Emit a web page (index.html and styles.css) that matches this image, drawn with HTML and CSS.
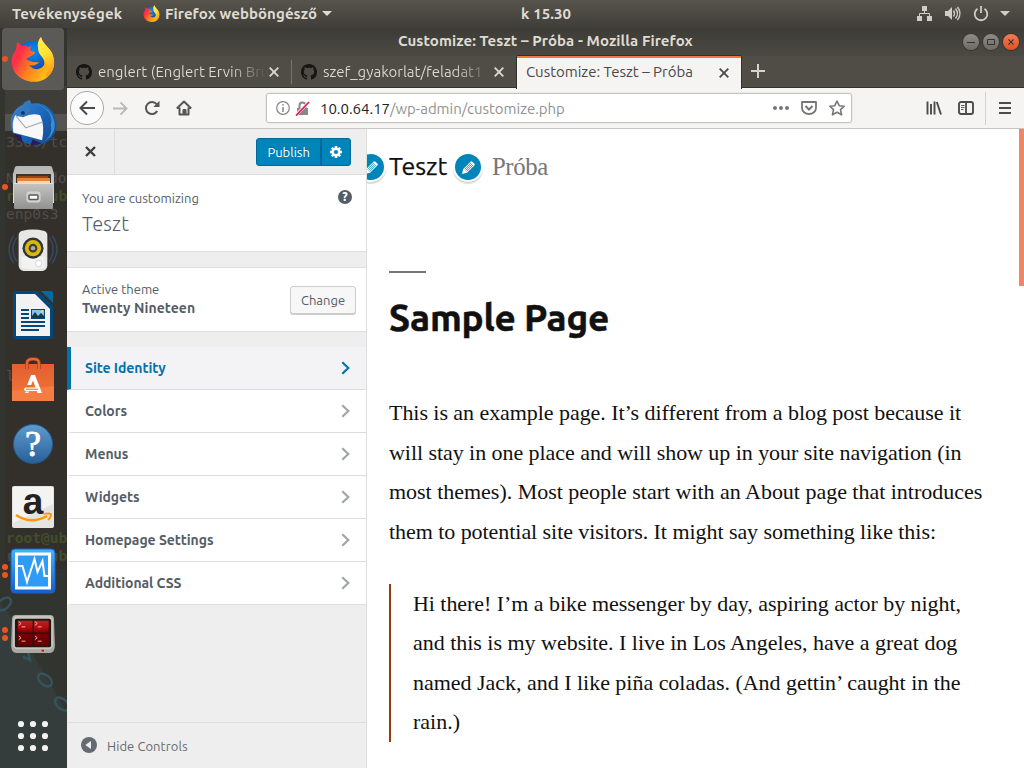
FILE: index.html
```html
<!DOCTYPE html>
<html lang="hu">
<head>
<meta charset="utf-8">
<title>Customize: Teszt – Próba</title>
<link rel="stylesheet" href="styles.css">
</head>
<body>
<svg class="defs" width="0" height="0">
  <defs>
    <linearGradient id="fxBody" x1="0" y1="0" x2="1" y2=".6"><stop offset="0" stop-color="#ff3750"/><stop offset=".3" stop-color="#ff2d48"/><stop offset=".6" stop-color="#ff7d20"/><stop offset="1" stop-color="#ffc414"/></linearGradient>
    <linearGradient id="fxTail" x1="0" y1="0" x2=".3" y2="1"><stop offset="0" stop-color="#fff44f"/><stop offset=".5" stop-color="#ffe332"/><stop offset="1" stop-color="#ff9f18"/></linearGradient>
    <radialGradient id="fxGlobe" cx=".5" cy=".3" r=".7"><stop offset="0" stop-color="#0290ee"/><stop offset=".5" stop-color="#0763ce"/><stop offset="1" stop-color="#222b7c"/></radialGradient>
    <linearGradient id="tb" x1="0" y1="0" x2="1" y2="1"><stop offset="0" stop-color="#4389c9"/><stop offset=".5" stop-color="#1a67b9"/><stop offset="1" stop-color="#174689"/></linearGradient>
    <linearGradient id="metal" x1="0" y1="0" x2="0" y2="1"><stop offset="0" stop-color="#c4c4c2"/><stop offset="1" stop-color="#929290"/></linearGradient>
    <linearGradient id="lid" x1="0" y1="0" x2="0" y2="1"><stop offset="0" stop-color="#b4b4b2"/><stop offset="1" stop-color="#e2e2e0"/></linearGradient>
    <linearGradient id="bag" x1="0" y1="0" x2="0" y2="1"><stop offset="0" stop-color="#e35e31"/><stop offset=".8" stop-color="#ef7335"/><stop offset="1" stop-color="#f57a39"/></linearGradient>
    <linearGradient id="help" x1="0" y1="0" x2="0" y2="1"><stop offset="0" stop-color="#5e9bce"/><stop offset="1" stop-color="#276099"/></linearGradient>
    <linearGradient id="vb" x1="0" y1="0" x2="0" y2="1"><stop offset="0" stop-color="#42b4ff"/><stop offset="1" stop-color="#155fce"/></linearGradient>
    <linearGradient id="red" x1="0" y1="0" x2="0" y2="33" gradientUnits="userSpaceOnUse"><stop offset="0" stop-color="#c9353c"/><stop offset=".45" stop-color="#b00a0a"/><stop offset=".6" stop-color="#7a0000"/><stop offset="1" stop-color="#660000"/></linearGradient>
    <symbol id="firefox" viewBox="0 0 44 46">
      <circle cx="22" cy="23" r="18" fill="url(#fxGlobe)"/>
      <path d="M6 6C8 7 10 9 11 10C14 9 16 10 17 11L21 10C19 12 19 14 20 15L24 16C24 18 22 19 20 20L15 23C19 25 22 27 28 26C26 29 22 30 18 29C23 35 30 34 33 29C34 24 31 20 29 14C27 8 27 4 30 1C32 8 37 10 41 17C46 28 42 38 34 43C23 49 9 45 3 35C-1 27 0 20 5 14Z" fill="url(#fxBody)"/>
      <path d="M30 1C32 8 37 10 41 17C45 26 43 37 35 42C34 37 38 31 34 25C31 20 27 18 27 12C26 7 28 3 30 1Z" fill="url(#fxTail)"/>
    </symbol>
    <symbol id="github" viewBox="0 0 16 16"><path fill="#151513" fill-rule="evenodd" d="M8 0C3.58 0 0 3.58 0 8c0 3.54 2.29 6.53 5.47 7.59.4.07.55-.17.55-.38 0-.19-.01-.82-.01-1.49-2.01.37-2.53-.49-2.69-.94-.09-.23-.48-.94-.82-1.13-.28-.15-.68-.52-.01-.53.63-.01 1.08.58 1.23.82.72 1.21 1.87.87 2.33.66.07-.52.28-.87.51-1.07-1.78-.2-3.64-.89-3.64-3.95 0-.87.31-1.59.82-2.15-.08-.2-.36-1.02.08-2.12 0 0 .67-.21 2.2.82.64-.18 1.32-.27 2-.27s1.36.09 2 .27c1.53-1.04 2.2-.82 2.2-.82.44 1.1.16 1.92.08 2.12.51.56.82 1.27.82 2.15 0 3.07-1.87 3.75-3.65 3.95.29.25.54.73.54 1.48 0 1.07-.01 1.93-.01 2.2 0 .21.15.46.55.38A8.01 8.01 0 0 0 16 8c0-4.42-3.58-8-8-8"/></symbol>
    <symbol id="x" viewBox="0 0 10 10"><path d="M.7.7L9.3 9.3M9.3.7L.7 9.3" fill="none" stroke="currentColor" stroke-width="1.8"/></symbol>
    <symbol id="chev" viewBox="0 0 9 14"><path d="M1.3 1.2L7.3 7L1.3 12.8" fill="none" stroke="currentColor" stroke-width="2.2"/></symbol>
    <symbol id="pencil" viewBox="0 0 16 16"><path d="M1 15L2.4 9.6L10.2 1.8Q11.2.8 12.3 1.8L14.2 3.7Q15.2 4.8 14.2 5.8L6.4 13.6Z" fill="#fff"/><path d="M3.8 10L10.6 3.2M6 12.2L12.8 5.4M4.9 11.1L11.7 4.3" stroke="#0085ba" stroke-width=".8"/></symbol>
  </defs>
</svg>

<header class="panel">
  <span class="panel-act">Tevékenységek</span>
  <svg class="panel-fx" width="17" height="17"><use href="#firefox"/></svg>
  <span class="panel-app">Firefox webböngésző</span>
  <svg class="panel-arrow" width="10" height="5"><path d="M0 0H10L5 5Z" fill="#dfdbd2"/></svg>
  <span class="panel-clock">k 15.30</span>
  <svg class="panel-status" width="94" height="18" fill="#cfcdc8">
    <path d="M5 1h5v5H5zM0 11h5v5H0zM10 11h5v5h-5z"/><path d="M7.5 6v3M2.5 11V8.500h10V11" fill="none" stroke="#cfcdc8"/>
    <path d="M28 6h3l4-4v13l-4-4h-3z"/><path d="M36.500 5.500q2 3 0 6M38.500 3.500q4 5 0 10M40.500 2q5 6.500 0 13" fill="none" stroke="#cfcdc8" stroke-width="1.400"/>
    <path d="M60.500 3.700a6.300 6.300 0 1 0 7 0M64 1v7" fill="none" stroke="#cfcdc8" stroke-width="1.800"/>
    <path d="M83 6h10l-5 5z"/>
  </svg>
</header>

<div class="desktop">
  <nav class="dock">
    <svg class="dock-back" width="67" height="740">
      <rect width="67" height="740" fill="#32342f"/>
      <path d="M0 575L12 590L67 685V740H0Z" fill="#343d3c"/>
      <g fill="none" stroke="#35535a" stroke-width="2.500"><ellipse cx="4" cy="576" rx="5" ry="8" transform="rotate(50 4 576)"/><ellipse cx="45" cy="652" rx="5" ry="8" transform="rotate(-50 45 652)"/><ellipse cx="62" cy="676" rx="5" ry="8" transform="rotate(-50 62 676)"/><path d="M23 629L30 632L28 624"/></g>
      <rect x="5" y="56" width="62" height="485" fill="#33302c"/>
      <rect x="5" y="58" width="62" height="28" fill="#3f3d38"/>
      <rect x="5" y="86" width="62" height="17" fill="#555350"/>
      <g class="term"><text x="6" y="119">3306/tc</text><text x="6" y="155">N</text><text x="49" y="155">do</text><text x="6" y="191">enp0s3</text><text x="6" y="353">l</text></g>
      <g class="term term-green"><text x="6" y="173">root@ub</text><text x="6" y="515">root@ub</text><text x="6" y="533">root@ub</text></g>
    </svg>
    <div class="slot slot-active"><svg width="44" height="46"><use href="#firefox"/></svg><i class="dot"></i></div>
    <div class="slot up"><svg width="49" height="48" viewBox="0 0 50 50">
      <path d="M2 31C-1 18 6 9 14 6C15 3 18 2 21 1L23 5C37 2 49 13 49 27C49 41 37 49 25 48C13 46 4 40 2 31Z" fill="url(#tb)"/>
      <path d="M26 5C40 8 46 19 43 27C45 34 41 42 33 46C43 41 48 34 47 25C45 14 38 7 26 5Z" fill="#398ed0"/>
      <path d="M4 36Q8 44 14 46L12 38ZM24 42L33 46Q28 49 22 48Z" fill="#2a1d55"/>
      <path d="M6 17L14 19Q24 14 32 17Q37 28 34 43L4 35Q2 24 6 17Z" fill="#f8f8f8"/><path d="M7 18L17 30L34 24" fill="none" stroke="#b0b0b0" stroke-width="1.300"/>
      <path d="M7 18Q9 10 17 7Q25 9 20 14Q15 17 12 18Z" fill="#3278bd"/><circle cx="14" cy="14.500" r="2" fill="#18365e"/>
    </svg></div>
    <div class="slot up"><svg width="43" height="45" viewBox="0 0 43 45">
      <path d="M3 2Q4 1 5 1H38Q39 1 40 2L42 9V38H1V9Z" fill="url(#lid)"/><path d="M4 9h35v10H4z" fill="#3a3733"/><path d="M6 11h30v8H6z" fill="#994519"/><path d="M5 13h33v5H5z" fill="#e5833c"/><path d="M6 16h32v2H6z" fill="#f5d7ad"/>
      <rect x="2" y="18" width="39" height="26" rx="1" fill="url(#metal)"/><path d="M2 18.500h39" stroke="#dededc"/><rect x="15" y="27" width="13" height="10" rx="2" fill="#ccc" stroke="#d8d8d8"/><rect x="17" y="30" width="9" height="4.500" rx="1" fill="#fff" stroke="#5a5a5a" stroke-width="1.500"/>
    </svg><i class="dot"></i></div>
    <div class="slot up"><svg width="50" height="44" viewBox="0 0 50 46">
      <path d="M8 9Q0 21 8 34M5 7Q-5 21 5 36M42 9Q50 21 42 34M45 7Q55 21 45 36" fill="none" stroke="#354b63" stroke-width="1.500"/>
      <path d="M13 2Q25-1 37 2Q40 3 40 7V38Q40 43 35 44H15Q10 43 10 38V7Q10 3 13 2Z" fill="#e7e7e5"/><path d="M13 29H37V40Q25 44 13 40Z" fill="#f3f3f3"/><circle cx="25" cy="20" r="11" fill="#333"/><circle cx="25" cy="20" r="8.500" fill="#d5b816"/><circle cx="25" cy="20" r="4.500" fill="#443d25"/><circle cx="25" cy="20" r="2.300" fill="#aaa"/><circle cx="31" cy="36" r="3.500" fill="#fff" stroke="#d0d0d0"/>
    </svg></div>
    <div class="slot up"><svg width="40" height="48" viewBox="0 0 40 48">
      <path d="M3 0H25L40 15V45Q40 48 37 48H3Q0 48 0 45V3Q0 0 3 0Z" fill="#04477a"/><path d="M3 3H22L37 18V45H3Z" fill="#f2f2f2"/><path d="M28 0H38Q40 0 40 2V12Z" fill="#0369a3"/>
      <path d="M8 19h8M8 23h8M8 27h8M8 31h24M8 35h24M8 39h18" stroke="#04477a" stroke-width="2"/><rect x="18.500" y="18.500" width="13" height="9" fill="#7fc6ef" stroke="#04477a"/><path d="M19 27V25L22 21L25 25L28 22L31 25V27Z" fill="#27343b"/><circle cx="29" cy="20.500" r="1.300" fill="#f2d543"/>
    </svg></div>
    <div class="slot up"><svg width="42" height="44" viewBox="0 0 42 44">
      <path d="M0 7H42V44H0Z" fill="url(#bag)"/><path d="M0 34L42 29V44H0Z" fill="#f47d44"/><path d="M15 12V6Q15 2 21 2Q27 2 27 6V12" fill="none" stroke="#b63f17" stroke-width="3.500"/><path d="M15 12V6Q15 2 21 2Q27 2 27 6V12" fill="none" stroke="#ea6a39" stroke-width="1.800"/>
      <path d="M19 18H23L30 36H25.500L21 23.500L19.200 28H15.200ZM14 30.500H27.500V34H14Q12 34 12 32.200Q12 30.500 14 30.500ZM13.500 34.500H17L16.500 36H13Z" fill="#fff"/><path d="M14 32.200H26" stroke="#ed6f39" stroke-width="1.100"/>
    </svg></div>
    <div class="slot"><svg width="40" height="40" viewBox="0 0 40 40"><circle cx="20" cy="20" r="19.500" fill="url(#help)" stroke="#265b91"/><text x="20" y="32" text-anchor="middle" class="help-glyph">?</text></svg></div>
    <div class="slot up"><svg width="42" height="42" viewBox="0 0 42 42"><rect width="42" height="42" rx="2" fill="#e4e4e3"/><path d="M1 1H41V18L1 37Z" fill="#f3f3f2"/><text x="21" y="28" text-anchor="middle" class="amazon-glyph">a</text><path d="M4 29Q19 39 35 30" fill="none" stroke="#f90" stroke-width="2.500"/><path d="M32 28Q36 27 39 28Q39 32 36 34" fill="none" stroke="#f90" stroke-width="1.800"/></svg></div>
    <div class="slot up"><svg width="46" height="46" viewBox="0 0 46 46"><rect x="1" y="1" width="44" height="44" rx="4" fill="url(#vb)" stroke="#1b62c6"/><rect x="6.500" y="6" width="33" height="34" fill="#2f9bf7" stroke="#fff" stroke-width="3"/><path d="M8 18H12.500L17 34L24.500 11L27.500 24L32.500 13L34.500 28H39" fill="none" stroke="#fff" stroke-width="2"/></svg><i class="dot dot-up"></i><i class="dot dot-down"></i></div>
    <div class="slot up-two"><svg width="46" height="40" viewBox="0 0 46 42"><path d="M5 1H41Q45 1 45 5L46 33Q46 40 41 41H5Q0 40 0 33L1 5Q1 1 5 1Z" fill="#aaa9a1"/><path d="M5 2H41Q44 2 44 7V32Q44 36 40 37H6Q2 36 2 32V7Q2 2 5 2Z" fill="#c7c6be"/><rect x="4" y="5" width="38" height="30" rx="2" fill="#231616"/><path d="M7 7h15.500v12.500H7zM24 7h15.500v12.500H24zM7 21h15.500v12H7zM24 21h15.500v12H24z" fill="url(#red)"/><path d="M8 8l2.500 2-2.500 2M11 13.500h4M25 8l2.500 2-2.500 2M28 13.500h4M8 23l2.500 2-2.500 2M11 28.500h4M25 23l2.500 2-2.500 2M28 28.500h4" fill="none" stroke="#efb6b6"/><path d="M32 38.500h2.500" stroke="#e00" stroke-width="2"/></svg><i class="dot dot-up"></i><i class="dot dot-down"></i></div>
    <svg class="apps" width="32" height="32" fill="#f2f2f0"><circle cx="4" cy="4" r="3.100"/><circle cx="16" cy="4" r="3.100"/><circle cx="28" cy="4" r="3.100"/><circle cx="4" cy="16" r="3.100"/><circle cx="16" cy="16" r="3.100"/><circle cx="28" cy="16" r="3.100"/><circle cx="4" cy="28" r="3.100"/><circle cx="16" cy="28" r="3.100"/><circle cx="28" cy="28" r="3.100"/></svg>
  </nav>

  <main class="window">
    <div class="titlebar">
      <span class="title">Customize: Teszt – Próba - Mozilla Firefox</span>
      <div class="win-buttons">
        <span class="wb"><svg width="10" height="10"><path d="M1 5.500h8" stroke="#33322e"/></svg></span>
        <span class="wb"><svg width="10" height="10"><path d="M1.500 2.500h7v5h-7z" fill="none" stroke="#33322e"/></svg></span>
        <span class="wb wb-close"><svg width="6" height="6"><use href="#x"/></svg></span>
      </div>
    </div>
    <div class="tabs">
      <div class="tab tab-one"><svg width="16" height="16"><use href="#github"/></svg><span class="tab-text">englert (Englert Ervin Bru</span><svg class="tab-x" width="10" height="10"><use href="#x"/></svg></div>
      <div class="tab tab-two"><svg width="16" height="16"><use href="#github"/></svg><span class="tab-text">szef_gyakorlat/feladat1</span><svg class="tab-x" width="10" height="10"><use href="#x"/></svg></div>
      <div class="tab tab-current"><span class="tab-name">Customize: Teszt – Próba</span><svg class="tab-x" width="10" height="10"><use href="#x"/></svg></div>
      <svg class="newtab" width="14" height="14"><path d="M7 0v14M0 7h14" stroke="#d5d3cf" stroke-width="2"/></svg>
    </div>
    <div class="toolbar">
      <span class="back"><svg width="17" height="16" viewBox="0 0 17 16"><path d="M16 8H2M8 1.500L1.500 8L8 14.500" fill="none" stroke="#4a4a4a" stroke-width="2"/></svg></span>
      <svg class="forward" width="16" height="15" viewBox="0 0 17 16"><path d="M1 8H15M9 1.500L15.500 8L9 14.500" fill="none" stroke="#b9b9b8" stroke-width="2"/></svg>
      <svg class="reload" width="16" height="16"><path d="M13.200 11A6 6 0 1 1 12.600 4.200" fill="none" stroke="#555" stroke-width="2"/><path d="M15.500 .8V7H9.300Z" fill="#555"/></svg>
      <svg class="home" width="16" height="16"><path d="M.8 8.500L8 1.500L15.200 8.500M3.500 7.500V14.500H12.500V7.500M7.500 14V10H9.500V14" fill="none" stroke="#555" stroke-width="2" stroke-linejoin="round"/></svg>
      <div class="urlbar">
        <svg class="info" width="14" height="14"><circle cx="7" cy="7" r="6.300" fill="none" stroke="#858585" stroke-width="1.200"/><path d="M7 6v5M7 3v1.600" stroke="#858585" stroke-width="1.500"/></svg>
        <svg class="lock" width="15" height="15"><path d="M2 7h11v7H2z" fill="#888"/><path d="M4.500 7V4.500q0-3 3-3t3 3V7" fill="none" stroke="#888" stroke-width="2"/><path d="M0 15L14 1" stroke="#fff" stroke-width="3"/><path d="M1 14.500L14 1" stroke="#e8184b" stroke-width="1.800"/></svg>
        <span class="url"><b>10.0.64.17</b>/wp-admin/customize.php</span>
        <svg class="url-actions" width="72" height="16" fill="none" stroke="#777"><g fill="#777" stroke="none"><circle cx="2" cy="8" r="2"/><circle cx="8" cy="8" r="2"/><circle cx="14" cy="8" r="2"/></g><path d="M29 2h14v6a7 6 0 0 1-14 0z" stroke-width="1.800" stroke-linejoin="round"/><path d="M32.500 6L36 9.500L39.500 6" stroke-width="2"/><path d="M64 1L66.200 5.700L71.200 6.200L67.500 9.700L68.600 14.800L64 12.200L59.400 14.800L60.500 9.700L56.800 6.200L61.800 5.700Z" stroke-width="1.600" stroke-linejoin="round"/></svg>
      </div>
      <svg class="library" width="16" height="16"><path d="M1.500 1.500v13M5 4v10.500M8.500 1.500v13M10.800 2L15 14.500" fill="none" stroke="#4b4b4b" stroke-width="1.900"/></svg>
      <svg class="side" width="16" height="14"><rect x="1" y="1" width="14" height="12" rx="2" fill="none" stroke="#4b4b4b" stroke-width="1.900"/><path d="M8 1v12" stroke="#4b4b4b" stroke-width="1.800"/><path d="M3 4.500h3.500M3 6.500h3.500M3 8.500h2.500" stroke="#4b4b4b" stroke-width=".9"/></svg>
      <span class="tool-sep"></span>
      <svg class="menu" width="12" height="12"><path d="M0 1h12M0 6h12M0 11h12" stroke="#4b4b4b" stroke-width="1.900"/></svg>
    </div>

    <div class="content">
      <aside class="customizer">
        <div class="cust-head">
          <span class="cust-close"><svg width="11" height="11" viewBox="0 0 11 11"><path d="M1 1L10 10M10 1L1 10" stroke="#3e3e3e" stroke-width="2.400"/></svg></span>
          <div class="publish"><span class="pub-label">Publish</span><span class="pub-gear"><svg width="12" height="12" viewBox="-6 -6 12 12"><circle r="3.300" fill="none" stroke="#fff" stroke-width="2.500"/><path d="M0-6V-3M0 3V6M-6 0H-3M3 0H6M-4.200-4.200L-2.500-2.500M4.200 4.200L2.500 2.500M4.200-4.200L2.500-2.500M-4.200 4.200L-2.500 2.500" stroke="#fff" stroke-width="2.500"/></svg></span></div>
        </div>
        <section class="info-box">
          <div class="customizing"><span>You are customizing</span><strong>Teszt</strong></div>
          <span class="help">?</span>
        </section>
        <section class="theme-box">
          <div class="theme"><span class="theme-label">Active theme</span><strong>Twenty Nineteen</strong></div>
          <span class="change">Change</span>
        </section>
        <ul class="sections">
          <li class="selected"><span>Site Identity</span><svg width="9" height="14"><use href="#chev"/></svg></li>
          <li><span>Colors</span><svg width="9" height="14"><use href="#chev"/></svg></li>
          <li><span>Menus</span><svg width="9" height="14"><use href="#chev"/></svg></li>
          <li><span>Widgets</span><svg width="9" height="14"><use href="#chev"/></svg></li>
          <li><span>Homepage Settings</span><svg width="9" height="14"><use href="#chev"/></svg></li>
          <li><span>Additional CSS</span><svg width="9" height="14"><use href="#chev"/></svg></li>
        </ul>
        <div class="collapse"><svg width="16" height="16"><circle cx="8" cy="8" r="8" fill="#656b70"/><path d="M4.300 8L10 4V12Z" fill="#eee"/></svg><span>Hide Controls</span></div>
      </aside>
      <article class="preview">
        <div class="site-head">
          <span class="edit edit-left"><svg width="15" height="15"><use href="#pencil"/></svg></span>
          <span class="site-title">Teszt</span>
          <span class="edit edit-mid"><svg width="15" height="15"><use href="#pencil"/></svg></span>
          <span class="site-desc">Próba</span>
        </div>
        <div class="entry">
          <h1><span>Sample Page</span></h1>
          <p><span class="tight">This is an example page. It’s different from a blog post because it</span><br><span class="tight">will stay in one place and will show up in your site navigation (in</span><br><span class="slight">most themes). Most people start with an About page that introduces</span><br><span class="tight">them to potential site visitors. It might say something like this:</span></p>
          <blockquote><span class="tight">Hi there! I’m a bike messenger by day, aspiring actor by night,</span><br><span class="slight">and this is my website. I live in Los Angeles, have a great dog</span><br><span class="slight">named Jack, and I like piña coladas. (And gettin’ caught in the</span><br>rain.)</blockquote>
        </div>
        <span class="scroll"></span>
      </article>
    </div>
  </main>
</div>
</body>
</html>
```

FILE: styles.css
```css
* { box-sizing: border-box; }
body { margin: 0; width: 1024px; height: 768px; overflow: hidden; font-family: Ubuntu, "Noto Sans", sans-serif; background: #33302c; white-space: nowrap; }
svg { display: block; flex: none; }
.defs { position: absolute; }

.panel { position: relative; height: 28px; display: flex; align-items: center; padding: 0 0 1px 12px; background: linear-gradient(#57544c, #403e39); color: #dfdbd2; font-size: 15px; font-weight: 700; letter-spacing: .08px; }
.panel-act { width: 131px; letter-spacing: .2px; }
.panel-fx { margin-right: 5px; }
.panel-app { width: 157px; }
.panel-clock { margin-left: 189px; }
.panel-status { margin-left: auto; margin-right: 13px; }

.desktop { display: flex; height: 740px; }
.dock { position: relative; width: 67px; display: flex; flex-direction: column; }
.dock-back { position: absolute; left: 0; top: 0; }
.term { font: 14.5px "DejaVu Sans Mono", monospace; fill: #504d49; }
.term-green { fill: #424d2d; font-weight: 700; }
.slot { position: relative; width: 67px; height: 64px; display: flex; align-items: center; justify-content: center; }
.slot-active::before { content: ""; position: absolute; left: 2px; top: 0; width: 62px; height: 62px; border-radius: 4px; background: #5b5a57; }
.slot > svg { position: relative; left: -.5px; }
.slot-active > svg { top: -1px; }
.up > svg { top: -1px; }
.up-two > svg { top: -2px; }
.dot { position: absolute; left: 2px; top: 28px; width: 6px; height: 6px; border-radius: 50%; background: #e95420; }
.dot-up { top: 24px; }
.dot-down { top: 32px; }
.up-two .dot-up { top: 23px; }
.up-two .dot-down { top: 31px; }
.apps { position: relative; margin: 52px 0 0 17px; }
.help-glyph { font: 400 36px "Liberation Serif", serif; fill: #fff; stroke: #fff; stroke-width: .8px; }
.amazon-glyph { font: 700 37px "Liberation Sans", sans-serif; fill: #222; }

.window { width: 957px; display: flex; flex-direction: column; background: #fff; }
.titlebar { position: relative; height: 28px; background: linear-gradient(#3d3b36, #4b4943); display: flex; align-items: center; color: #dfdbd2; }
.title { margin: -4px 0 0 331px; font-size: 15px; font-weight: 700; letter-spacing: .08px; }
.win-buttons { margin-left: auto; display: flex; gap: 4px; padding-right: 5px; }
.wb { width: 16px; height: 16px; border-radius: 50%; display: flex; align-items: center; justify-content: center; background: linear-gradient(#8d8b84, #6d6b66); box-shadow: 0 0 0 1px #383631; }
.wb-close { background: linear-gradient(#f47b52, #e25125); color: #33322e; }
.tabs { height: 32px; background: #504d46; border-bottom: 1px solid #32312c; display: flex; align-items: center; color: #dcdad5; font-size: 15px; }
.tab { height: 32px; display: flex; align-items: center; position: relative; }
.tab-one { width: 225px; padding-left: 9px; }
.tab-one::after { content: ""; position: absolute; right: 0; top: 4px; width: 1px; height: 24px; background: #77756f; }
.tab-two { width: 225px; padding-left: 9px; }
.tab-text { margin-left: 6px; width: 171px; background: linear-gradient(90deg, #dcdad5 76%, rgba(220,218,213,.05) 98%); -webkit-background-clip: text; background-clip: text; color: transparent; }
.tab-current { width: 224px; height: 33px; padding-left: 9px; padding-bottom: 2px; background: #f5f4f2; border-top: 2px solid #f07746; color: #494949; align-self: flex-start; box-shadow: 0 -1px #32312c, -1px 0 #32312c, 1px 0 #32312c; }
.tab-name { padding-bottom: 2px; }
.tab-current .tab-x { margin-left: auto; margin-right: 12px; }
.newtab { margin: -2px 0 0 10px; }
.toolbar { height: 41px; background: #f5f4f3; border-bottom: 1px solid #c8c5c2; display: flex; align-items: center; padding-left: 3px; }
.back { width: 34px; height: 34px; border: 1px solid #aaa9a8; border-radius: 50%; background: #fbfbfb; display: flex; align-items: center; justify-content: center; }
.forward { margin-left: 8px; }
.reload { margin-left: 16px; }
.home { margin-left: 16px; }
.urlbar { width: 586px; height: 30px; margin-left: 74px; border: 1px solid #c5c3c1; border-radius: 3px; background: #fff; display: flex; align-items: center; padding-left: 9px; box-shadow: 0 0 0 1px #ebeae8; }
.lock { margin-left: 5px; }
.url { margin-left: 10px; padding-top: 1px; font-size: 15px; color: #929292; letter-spacing: -.03px; }
.url b { font-weight: 400; color: #222; }
.url-actions { margin-left: auto; margin-right: 6px; }
.library { margin-left: 74px; }
.side { margin-left: 16px; }
.tool-sep { width: 1px; height: 33px; background: #d4d2d0; margin-left: 11px; }
.menu { margin-left: 13px; }

.content { flex: 1; display: flex; min-height: 0; }
.customizer { width: 300px; background: #eee; border-right: 1px solid #ddd; display: flex; flex-direction: column; color: #555d66; font-size: 13px; }
.cust-head { height: 46px; border-bottom: 1px solid #ddd; display: flex; align-items: center; justify-content: space-between; padding-right: 15px; }
.cust-close { width: 48px; height: 45px; border-right: 1px solid #ddd; display: flex; align-items: center; justify-content: center; }
.publish { display: flex; width: 95px; height: 28px; border: 1px solid #006799; border-radius: 3px; background: #0085ba; color: #fff; align-items: center; }
.pub-label { width: 64px; text-align: center; text-shadow: 0 -1px 1px #006799; }
.pub-gear { width: 30px; height: 26px; border-left: 2px solid #006799; display: flex; align-items: center; justify-content: center; }
.info-box { height: 77px; background: #fff; border-bottom: 1px solid #ddd; display: flex; justify-content: space-between; padding: 14px 14px 0 15px; }
.customizing { display: flex; flex-direction: column; line-height: 19px; }
.customizing strong { font-size: 20px; font-weight: 300; line-height: 26px; margin-top: 3px; letter-spacing: .15px; }
.help { margin-top: 1px; width: 14px; height: 14px; border-radius: 50%; background: #555d66; color: #fff; font-size: 12px; line-height: 14px; text-align: center; font-weight: 800; }
.theme-box { height: 65px; margin-top: 15px; background: #fff; border-top: 1px solid #ddd; border-bottom: 1px solid #ddd; display: flex; align-items: center; justify-content: space-between; padding: 0 10px 0 15px; }
.theme { display: flex; flex-direction: column; line-height: 19px; margin-top: -1px; }
.theme strong { font-size: 14px; letter-spacing: .08px; }
.change { width: 66px; height: 28px; border: 1px solid #ccc; border-radius: 3px; background: #f7f7f7; box-shadow: 0 1px #ccc; line-height: 26px; text-align: center; }
.sections { list-style: none; margin: 15px 0 0; padding: 0; font-size: 14px; font-weight: 700; letter-spacing: -.05px; }
.sections li { height: 43px; background: #fff; border-bottom: 1px solid #ddd; border-left: 4px solid #fff; display: flex; align-items: center; justify-content: space-between; padding: 0 16px 0 14px; }
.sections svg { color: #a0a5aa; }
.sections .selected { color: #0073aa; background: #f3f3f5; border-left-color: #0073aa; }
.sections .selected svg { color: #0073aa; }
.collapse { margin-top: auto; height: 46px; border-top: 1px solid #ddd; display: flex; align-items: center; gap: 10px; padding-left: 14px; color: #656b70; letter-spacing: .08px; }
.collapse svg { margin-top: -2px; }

.preview { position: relative; flex: 1; overflow: hidden; padding-left: 22px; color: #111; background: #fff; }
.site-head { position: relative; height: 76px; display: flex; align-items: center; }
.edit { position: absolute; top: 23px; width: 30px; height: 30px; border: 2px solid #fff; border-radius: 50%; background: #0085ba; box-shadow: 0 2px 1px rgba(60,60,60,.2); display: flex; align-items: center; justify-content: center; }
.edit-left { left: -33px; }
.edit-mid { left: 64px; }
.site-title { font-size: 25px; font-weight: 400; width: 103px; letter-spacing: -.1px; padding-bottom: 2px; -webkit-text-stroke: .25px #111; }
.site-desc { font: 24.75px "Liberation Serif", serif; color: #767676; letter-spacing: -.4px; }
.entry { padding-top: 66px; }
h1 { margin: 0; font-size: 37px; line-height: 46px; height: 122px; font-weight: 700; letter-spacing: -.25px; -webkit-text-stroke: .5px #111; }
h1::before { content: ""; display: block; width: 37px; height: 2px; background: #767676; margin-bottom: 22px; }
.entry p, blockquote { margin: 0; font: 22px/39.6px "Liberation Serif", serif; }
.tight { letter-spacing: -.055px; }
.slight { letter-spacing: -.02px; }
blockquote { margin-top: 32.2px; border-left: 2px solid #943c10; padding-left: 22px; }
.scroll { position: absolute; right: 0; top: 0; width: 5px; height: 157px; background: #ee8768; }
```
